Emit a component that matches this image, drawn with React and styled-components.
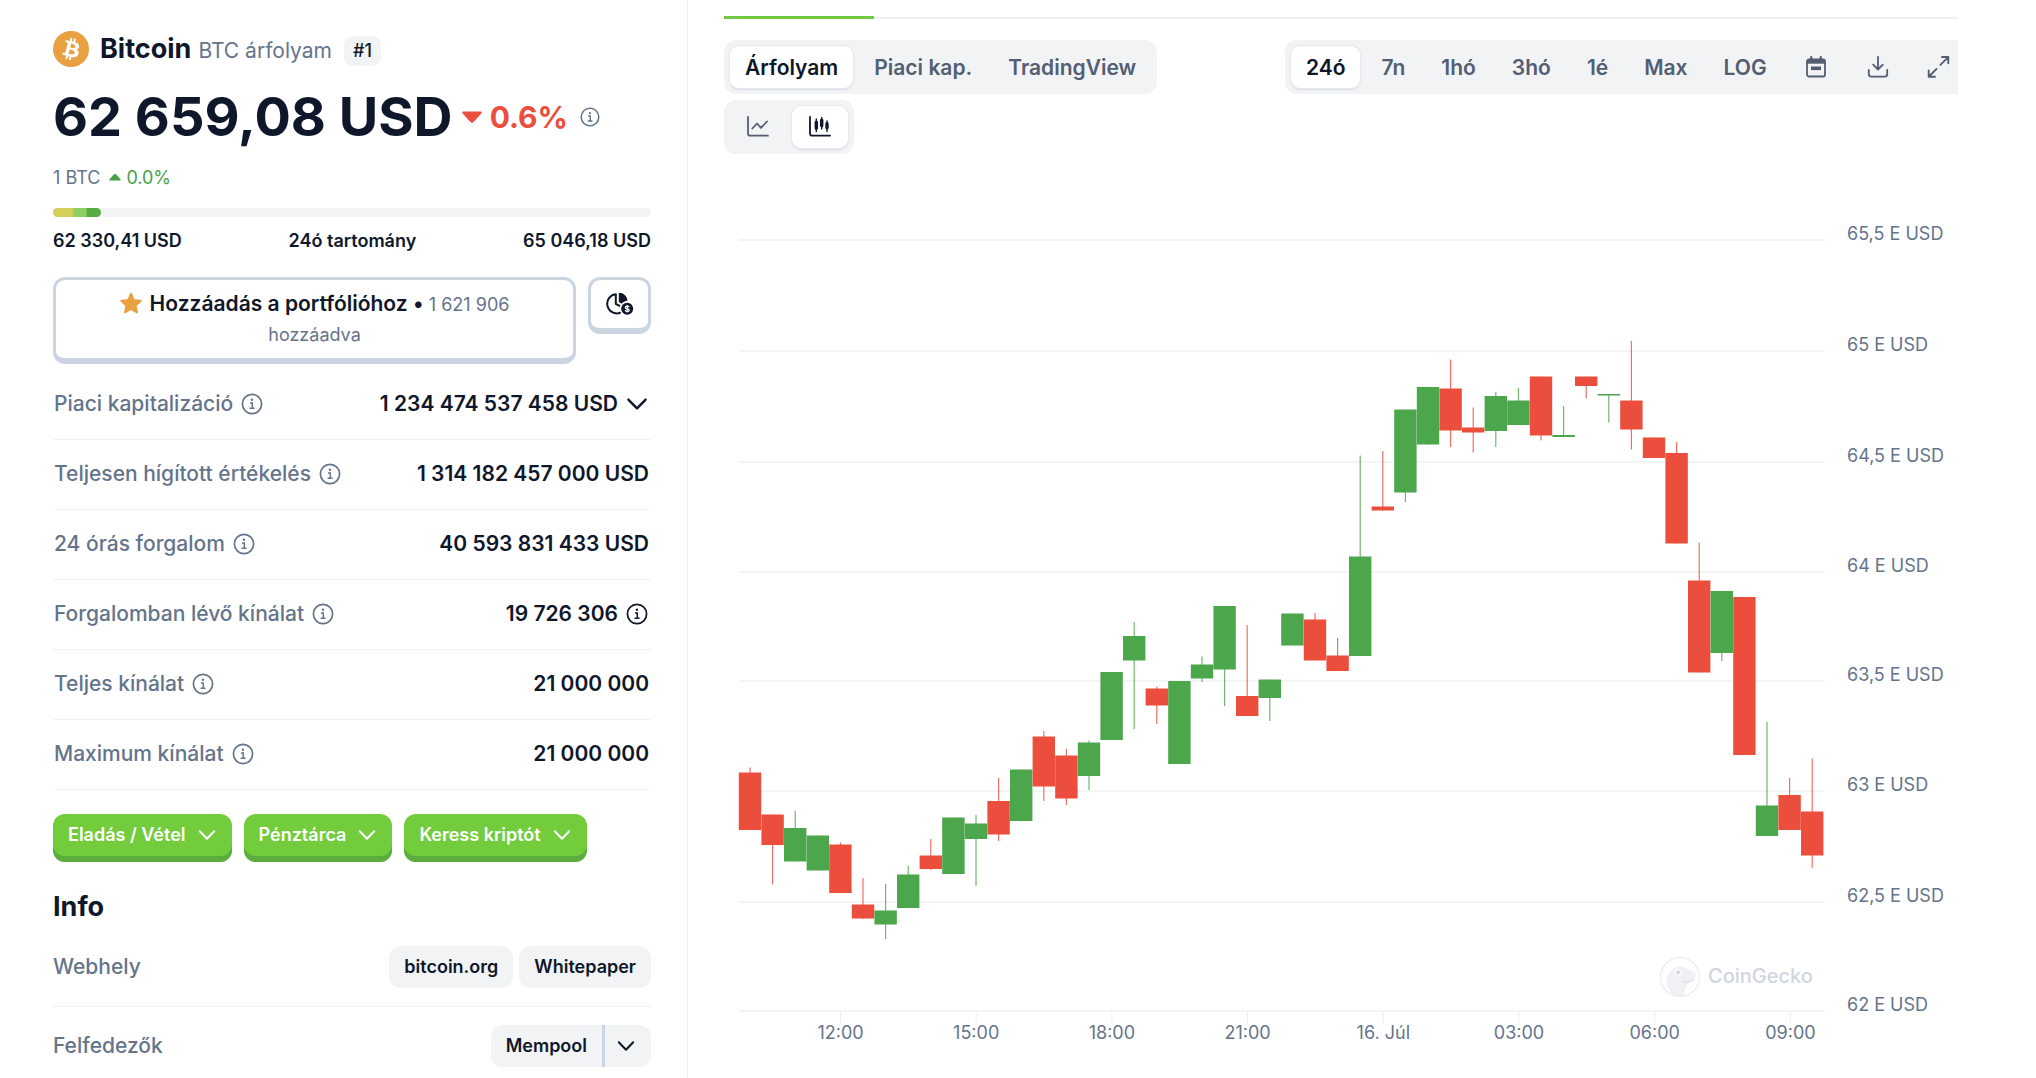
import { useState } from "react";
import styled, { createGlobalStyle } from "styled-components";

const GlobalStyle = createGlobalStyle`
  * {
    box-sizing: border-box;
  }

  body {
    margin: 0;
    background: #ffffff;
    color: #0f172a;
    font-family: Inter, "Liberation Sans", sans-serif;
    font-size: 21px;
    line-height: 30px;
  }

  button {
    font-family: inherit;
    border: 0;
    cursor: pointer;
  }

  svg {
    display: block;
    flex-shrink: 0;
  }
`;

const Page = styled.div`
  display: grid;
  grid-template-columns: 688px minmax(0, 1fr);
  min-height: 100vh;
`;

const Sidebar = styled.aside`
  padding: 31px 36px 0 53px;
  border-right: 1px solid #eff2f5;
`;

const Heading = styled.h1`
  display: flex;
  align-items: center;
  margin: 0;
  height: 36px;
  font-size: 27px;
  font-weight: 700;
`;

const CoinName = styled.span`
  margin-left: 11px;
`;

const Ticker = styled.span`
  margin: 3px 0 0 7px;
  font-size: 21px;
  font-weight: 400;
  color: #64748b;
`;

const Rank = styled.span`
  margin: 4px 0 0 12px;
  padding: 0 9px;
  border-radius: 9px;
  background: #f1f3f5;
  font-size: 18px;
  font-weight: 500;
`;

const PriceRow = styled.div`
  display: flex;
  align-items: center;
  margin-top: 14px;
  color: #64748b;
`;

const Price = styled.span`
  font-size: 54px;
  line-height: 72px;
  font-weight: 700;
  color: #0f172a;
`;

const Change = styled.span`
  display: flex;
  align-items: center;
  gap: ${(props) => (props.$large ? "8px" : "5px")};
  margin: 0 11px 0 9px;
  font-size: ${(props) => (props.$large ? "30px" : "18px")};
  font-weight: ${(props) => (props.$large ? 700 : 400)};
  color: ${(props) => (props.$up ? "#46a148" : "#ec4e3d")};
`;

const BtcRow = styled.div`
  display: flex;
  align-items: center;
  margin-top: 10px;
  font-size: 18px;
  line-height: 30px;
  color: #64748b;
`;

const RangeTrack = styled.div`
  height: 9px;
  margin-top: 15px;
  border-radius: 5px;
  background: #f1f3f5;
`;

const RangeFill = styled.div`
  height: 100%;
  border-radius: 5px;
  background: linear-gradient(
    90deg,
    #d4cf5c 40%,
    #8ed062 44%,
    #8ed062 68%,
    #57ab42 72%
  );
`;

const RangeLabels = styled.div`
  display: flex;
  justify-content: space-between;
  margin-top: 12px;
  font-size: 18px;
  line-height: 24px;
  font-weight: 600;
`;

const Actions = styled.div`
  display: flex;
  align-items: flex-start;
  gap: 12px;
  margin-top: 24px;
`;

const OutlineButton = styled.button`
  border: 3px solid #cbd5e1;
  border-bottom-width: 6px;
  border-radius: 12px;
  background: #ffffff;
  color: #0f172a;
`;

const PortfolioButton = styled(OutlineButton)`
  flex: 1;
  padding: 9px 60px;
  font-size: 21px;
  line-height: 30px;
  font-weight: 600;

  svg {
    display: inline-block;
    margin-right: 8px;
    vertical-align: -3px;
  }

  small {
    font-size: 18px;
    line-height: 24px;
    font-weight: 400;
    color: #64748b;
  }
`;

const PieButton = styled(OutlineButton)`
  display: flex;
  align-items: center;
  justify-content: center;
  width: 63px;
  height: 57px;
  padding: 0;
`;

const StatsTable = styled.table`
  width: 100%;
  margin-top: 5px;
  border-collapse: collapse;

  tr {
    height: 70px;
    border-bottom: 1px solid #eff2f5;
  }

  th,
  td {
    padding: 0 2px 0 1px;
  }
`;

const StatLabel = styled.th`
  font-weight: 500;
  color: #64748b;
`;

const StatValue = styled.td`
  font-weight: 600;
`;

const CellContent = styled.div`
  display: flex;
  align-items: center;
  justify-content: ${(props) => (props.$end ? "flex-end" : "flex-start")};
  gap: 7px;
`;

const ButtonRow = styled.div`
  display: flex;
  gap: 12px;
  margin-top: 24px;
`;

const GreenButton = styled.button`
  display: flex;
  align-items: center;
  gap: 11px;
  height: 48px;
  padding: 0 15px 6px;
  border-radius: 12px;
  background: #72cc3c;
  box-shadow: inset 0 -6px 0 #5bae3e;
  color: #ffffff;
  font-size: 18px;
  font-weight: 600;
`;

const InfoTitle = styled.h2`
  margin: 27px 0 3px;
  font-size: 27px;
  line-height: 36px;
  font-weight: 700;
`;

const InfoRow = styled.div`
  display: flex;
  align-items: center;
  justify-content: space-between;
  padding: 18px 0;
  border-bottom: 1px solid #eff2f5;
  font-weight: 500;
  color: #64748b;

  &:last-child {
    padding-bottom: 0;
    border-bottom: 0;
  }
`;

const Pills = styled.div`
  display: flex;
  gap: 6px;
`;

const Pill = styled.a`
  padding: 6px 15px;
  border-radius: 12px;
  background: #f1f3f5;
  color: #0f172a;
  font-size: 18px;
  font-weight: 600;
  text-decoration: none;
`;

const SplitPill = styled.div`
  display: flex;
  overflow: hidden;
  border-radius: 12px;
  background: #f1f3f5;

  a {
    border-radius: 0;
  }

  button {
    display: flex;
    align-items: center;
    padding: 0 15px 0 11px;
    border-left: 3px solid #cbd5e1;
    background: transparent;
    color: #0f172a;
  }
`;

const Main = styled.main`
  min-width: 0;
  padding: 16px 78px 0 36px;
`;

const TabLine = styled.div`
  height: 3px;
  background: linear-gradient(transparent 1px, #eff2f5 1px);
`;

const ActiveTab = styled.div`
  width: 150px;
  height: 3px;
  background: #72c840;
`;

const Toolbar = styled.div`
  display: grid;
  grid-template-columns: minmax(0, 5fr) minmax(0, 6fr);
  align-items: start;
  margin-top: 21px;
`;

const ToolbarLeft = styled.div`
  display: flex;
  flex-wrap: wrap;
  gap: 6px;
`;

const ToolbarRight = styled.div`
  overflow: hidden;
`;

const Segmented = styled.div`
  display: flex;
  gap: 6px;
  width: max-content;
  padding: 6px;
  border-radius: 12px;
  background: #f1f3f5;
`;

const Segment = styled.button`
  display: flex;
  align-items: center;
  justify-content: center;
  height: 42px;
  padding: 0 15px;
  border-radius: 9px;
  background: ${(props) => (props.$active ? "#ffffff" : "transparent")};
  box-shadow: ${(props) =>
    props.$active ? "0 0 0 1px #e5e8ec, 0 2px 2px #d9dce3" : "none"};
  color: ${(props) => (props.$active ? "#0f172a" : "#535e72")};
  font-size: 21px;
  font-weight: 600;
`;

const ChartSvg = styled.svg`
  width: 100%;
  height: auto;
  margin-top: 46px;
  font-size: 18px;
  fill: #64748b;
`;

const Watermark = styled.text`
  font-size: 20px;
  font-weight: 500;
  fill: #d0d5de;
`;

const InfoIcon = ({ size = 24 }) => (
  <svg width={size} height={size} viewBox="0 0 24 24" fill="none">
    <circle cx="12" cy="12" r="9.6" stroke="currentColor" strokeWidth="1.7" />
    <circle cx="11.9" cy="7.8" r="1.2" fill="currentColor" />
    <path
      d="M10 10.9h2.3v5.2M9.6 16.3h5"
      stroke="currentColor"
      strokeWidth="1.5"
    />
  </svg>
);

const Chevron = ({ size = 24 }) => (
  <svg width={size} height={size} viewBox="0 0 20 20" fill="none">
    <path
      d="M2.8 6.3 10 13.7l7.2-7.4"
      stroke="currentColor"
      strokeWidth="2"
      strokeLinecap="round"
      strokeLinejoin="round"
    />
  </svg>
);

const BitcoinLogo = () => (
  <svg width="36" height="36" viewBox="0 0 32 32">
    <circle cx="16" cy="16" r="16" fill="#e8a040" />
    <path
      fill="#ffffff"
      d="M23.189 14.02c.314-2.096-1.283-3.223-3.465-3.975l.708-2.84-1.728-.43-.69 2.765c-.454-.114-.92-.22-1.385-.326l.695-2.783L15.596 6l-.708 2.839c-.376-.086-.746-.17-1.104-.26l.002-.009-2.384-.595-.46 1.846s1.283.294 1.256.312c.7.175.826.638.805 1.006l-.806 3.235c.048.012.11.03.18.057l-.183-.045-1.13 4.532c-.086.212-.303.531-.793.41.018.025-1.256-.313-1.256-.313l-.858 1.978 2.25.561c.418.105.828.215 1.231.318l-.715 2.872 1.727.43.708-2.84c.472.127.93.245 1.378.357l-.706 2.828 1.728.43.715-2.866c2.948.558 5.164.333 6.097-2.333.752-2.146-.037-3.385-1.588-4.192 1.13-.26 1.98-1.003 2.207-2.538zm-3.95 5.538c-.533 2.147-4.148.986-5.32.695l.95-3.805c1.172.293 4.929.872 4.37 3.11zm.535-5.569c-.487 1.953-3.495.96-4.47.717l.86-3.45c.975.243 4.118.696 3.61 2.733z"
    />
  </svg>
);

const CaretDown = () => (
  <svg width="20" height="12" viewBox="0 0 20 12">
    <path
      d="M1.6.5h16.8c1.2 0 1.7 1 .9 1.9l-7.7 8.6c-.9 1-2.3 1-3.2 0L.7 2.4C-.1 1.5.4.5 1.6.5z"
      fill="currentColor"
    />
  </svg>
);

const CaretUp = () => (
  <svg width="12" height="12" viewBox="0 0 12 12">
    <path
      d="M1 8.5h10c.8 0 1-.7.5-1.2L7 2.2c-.6-.7-1.4-.7-2 0L.5 7.3C0 7.8.2 8.5 1 8.5z"
      fill="currentColor"
    />
  </svg>
);

const Star = () => (
  <svg width="22" height="22" viewBox="0 0 22 22">
    <path
      d="M11 .8c.5 0 .8.3 1 .7l2.5 5.7 6.2.6c1 .1 1.3 1.2.6 1.9l-4.7 4.2 1.4 6.1c.2 1-.8 1.7-1.6 1.2L11 17.9l-5.4 3.3c-.8.5-1.8-.2-1.6-1.2l1.4-6.1L.7 9.7C0 9 .3 7.9 1.3 7.8l6.2-.6L10 1.5c.2-.4.5-.7 1-.7z"
      fill="#e8a040"
    />
  </svg>
);

const PieIcon = () => (
  <svg width="28" height="24" viewBox="0 0 28 24" fill="none">
    <path
      d="M9.8 2.2A9.6 9.6 0 1 0 14 20.8"
      stroke="#0f172a"
      strokeWidth="2"
      strokeLinecap="round"
    />
    <path d="M9.8 2.2v9.6l4.2 2.4" stroke="#0f172a" strokeWidth="2" />
    <path
      d="M12.8.8c4.7 0 8.3 3.4 8.7 7.9-2.6.2-4.4 1.2-5.7 3l-3-1.7z"
      fill="#0f172a"
    />
    <circle cx="21.2" cy="16.8" r="6" fill="#0f172a" />
    <path
      d="M23.2 15.2c-.3-.8-1-1.1-2-1.1-2.6 0-2.6 2.5 0 2.7 2.7.2 2.7 2.7 0 2.7-1.1 0-1.8-.4-2.1-1.2M21.2 13v7.6"
      stroke="#ffffff"
      strokeWidth="1.2"
    />
  </svg>
);

const LineChartIcon = () => (
  <svg width="26" height="26" viewBox="0 0 26 26" fill="none">
    <path
      d="M3 3v16.5c0 1.5.7 2.2 2.2 2.2H23"
      stroke="currentColor"
      strokeWidth="1.8"
      strokeLinecap="round"
    />
    <path
      d="M7.3 14.5 12 9.5l4 4.3 6-6.3"
      stroke="currentColor"
      strokeWidth="1.8"
      strokeLinecap="round"
      strokeLinejoin="round"
    />
  </svg>
);

const CandlesIcon = () => (
  <svg width="26" height="26" viewBox="0 0 26 26" fill="none">
    <path
      d="M3 3v16.5c0 1.5.7 2.2 2.2 2.2H23"
      stroke="currentColor"
      strokeWidth="1.8"
      strokeLinecap="round"
    />
    <path
      d="M9.3 5v12.5M14.7 3.5V15M20 7v10.5"
      stroke="currentColor"
      strokeWidth="1.4"
      strokeLinecap="round"
    />
    <path
      d="M9.3 8.2v6M14.7 6.2v5.5M20 9.8v4"
      stroke="currentColor"
      strokeWidth="3.4"
      strokeLinecap="round"
    />
  </svg>
);

const CalendarIcon = () => (
  <svg width="26" height="26" viewBox="0 0 26 26" fill="none">
    <rect
      x="4"
      y="5.5"
      width="18"
      height="17"
      rx="2"
      stroke="currentColor"
      strokeWidth="1.8"
    />
    <path d="M4 5.5h18v4.2H4z" fill="currentColor" />
    <path
      d="M8.2 3v4M17.8 3v4"
      stroke="currentColor"
      strokeWidth="2.2"
      strokeLinecap="round"
    />
    <path d="M8 12.5h10v3.6H8z" fill="currentColor" />
  </svg>
);

const DownloadIcon = () => (
  <svg width="26" height="26" viewBox="0 0 26 26" fill="none">
    <path
      d="M13 3v12M8.2 10.7 13 15.5l4.8-4.8M3.8 15.8V20c0 1.7.9 2.6 2.6 2.6h13.2c1.7 0 2.6-.9 2.6-2.6v-4.2"
      stroke="currentColor"
      strokeWidth="1.8"
      strokeLinecap="round"
      strokeLinejoin="round"
    />
  </svg>
);

const ExpandIcon = () => (
  <svg width="26" height="26" viewBox="0 0 26 26" fill="none">
    <path
      d="M15 3h6.3v6.2M21 3.3l-7.6 7.6M8 22.8H1.7v-6.3M2 22.5l7.6-7.6"
      stroke="currentColor"
      strokeWidth="1.9"
      strokeLinecap="round"
      strokeLinejoin="round"
    />
  </svg>
);

const stats = [
  { label: "Piaci kapitalizáció", value: "1 234 474 537 458 USD", icon: "more" },
  { label: "Teljesen hígított értékelés", value: "1 314 182 457 000 USD" },
  { label: "24 órás forgalom", value: "40 593 831 433 USD" },
  { label: "Forgalomban lévő kínálat", value: "19 726 306", icon: "info" },
  { label: "Teljes kínálat", value: "21 000 000" },
  { label: "Maximum kínálat", value: "21 000 000" },
];

const views = ["Árfolyam", "Piaci kap.", "TradingView"];
const ranges = ["24ó", "7n", "1hó", "3hó", "1é", "Max", "LOG"];

const priceTicks = [
  { label: "65,5 E USD", y: 240 },
  { label: "65 E USD", y: 351 },
  { label: "64,5 E USD", y: 462 },
  { label: "64 E USD", y: 572 },
  { label: "63,5 E USD", y: 681 },
  { label: "63 E USD", y: 791 },
  { label: "62,5 E USD", y: 902 },
  { label: "62 E USD", y: 1011 },
];

const timeTicks = [
  "12:00",
  "15:00",
  "18:00",
  "21:00",
  "16. Júl",
  "03:00",
  "06:00",
  "09:00",
];

// one candle per half hour: direction, high, body top, body bottom, low
const candles = [
  ["down", 767.5, 772.5, 830, 830],
  ["down", 814.5, 814.5, 845, 884.5],
  ["up", 811, 828, 861.5, 861.5],
  ["up", 835.5, 835.5, 870.5, 870.5],
  ["down", 842.5, 844.5, 893, 893],
  ["down", 878, 904.5, 918.5, 919],
  ["up", 884, 910.5, 924.5, 939],
  ["up", 866, 874.5, 908, 908],
  ["down", 839, 855.5, 869, 870],
  ["up", 817.5, 817.5, 874, 874],
  ["up", 815, 823.5, 839, 886],
  ["down", 778, 801, 834.5, 841],
  ["up", 769.5, 769.5, 821, 821],
  ["down", 731, 736.5, 786.5, 801],
  ["down", 749, 755.5, 798.5, 805],
  ["up", 740.5, 742.5, 776, 790],
  ["up", 672, 672, 740, 740],
  ["up", 622, 636, 660.5, 729],
  ["down", 686.5, 688.5, 705.5, 724],
  ["up", 681, 681, 764, 764],
  ["up", 656.5, 664.5, 678.5, 682],
  ["up", 606, 606, 669.5, 706],
  ["down", 625, 696, 716, 716],
  ["up", 679.5, 679.5, 698, 721],
  ["up", 613.5, 613.5, 645.5, 645.5],
  ["down", 613, 619.5, 660.5, 660.5],
  ["down", 638, 655.5, 671, 671],
  ["up", 455.5, 556.5, 656, 656],
  ["down", 451, 506.5, 510.5, 510.5],
  ["up", 409.5, 409.5, 492.5, 502],
  ["up", 387, 387, 444.5, 444.5],
  ["down", 359.5, 388.5, 430.5, 447],
  ["down", 407.5, 427.5, 432.5, 452.5],
  ["up", 392, 396, 431, 447],
  ["up", 388, 400.5, 425, 425],
  ["down", 376.5, 376.5, 435.5, 440.5],
  ["up", 406, 435, 437, 437],
  ["down", 376.5, 376.5, 386, 398.5],
  ["up", 394, 394, 395.5, 422.5],
  ["down", 341, 400.5, 429.5, 449.5],
  ["down", 437.5, 437.5, 458, 458],
  ["down", 442, 453, 543.5, 543.5],
  ["down", 542.5, 580.5, 672.5, 672.5],
  ["up", 591, 591, 653, 661],
  ["down", 597, 597, 755, 755],
  ["up", 722, 805.5, 836, 836],
  ["down", 778, 795, 830, 830],
  ["down", 758.5, 811.5, 855.5, 868],
];

const PriceChart = () => (
  <ChartSvg viewBox="0 200 1234 860" role="img" aria-label="Bitcoin árfolyam">
    {priceTicks.map(({ label, y }) => (
      <g key={label}>
        <path d={`M15 ${y}H1101`} stroke="#eff1f3" strokeWidth="1.5" />
        <text x="1123" y={y}>
          {label}
        </text>
      </g>
    ))}
    {timeTicks.map((label, i) => (
      <g key={label}>
        <path d={`M${116.5 + i * 135.7} 1011v14`} stroke="#eff1f3" />
        <text x={116.5 + i * 135.7} y="1039" textAnchor="middle">
          {label}
        </text>
      </g>
    ))}
    {candles.map(([direction, high, top, bottom, low], i) => {
      const x = 26 + i * 22.6;
      const color = direction === "up" ? "#4ca64c" : "#ec4e3d";
      return (
        <g key={i} fill={color}>
          <rect x={x - 0.6} y={high} width="1.2" height={low - high} opacity="0.8" />
          <rect x={x - 11.2} y={top} width="22.4" height={bottom - top} />
        </g>
      );
    })}
    <circle cx="956" cy="977" r="19.5" fill="#ffffff" stroke="#eceef1" strokeWidth="1.5" />
    <path
      d="M947 993c-4-8-6-12-2.5-19 2.5-5 6.5-7.5 11-7.3 6 .2 7.5 2.3 11 3.8 3.5 1.3 5.5 2.8 5.5 5 0 3.5-5 5.5-8 8-3 3-3 8-5 13-5 1-9-.5-12-3.5z"
      fill="#eff1f4"
    />
    <path d="M958 982c5 .3 9-.3 12-2.5" fill="none" stroke="#dde1e6" strokeWidth="1.5" />
    <circle cx="954" cy="972.5" r="3.5" fill="#ffffff" />
    <circle cx="954" cy="972.5" r="2.2" fill="#d5dae1" />
    <Watermark x="984" y="983">
      CoinGecko
    </Watermark>
  </ChartSvg>
);

function App() {
  const [view, setView] = useState("Árfolyam");
  const [range, setRange] = useState("24ó");
  const [chartType, setChartType] = useState("candles");
  const rangeFill = 8;

  return (
    <>
      <GlobalStyle />
      <Page>
        <Sidebar>
          <Heading>
            <BitcoinLogo />
            <CoinName>Bitcoin</CoinName>
            <Ticker>BTC árfolyam</Ticker>
            <Rank>#1</Rank>
          </Heading>
          <PriceRow>
            <Price>62 659,08 USD</Price>
            <Change $large>
              <CaretDown />
              0.6%
            </Change>
            <InfoIcon size={22} />
          </PriceRow>
          <BtcRow>
            1 BTC
            <Change $up>
              <CaretUp />
              0.0%
            </Change>
          </BtcRow>
          <RangeTrack>
            <RangeFill style={{ width: `${rangeFill}%` }} />
          </RangeTrack>
          <RangeLabels>
            <span>62 330,41 USD</span>
            <span>24ó tartomány</span>
            <span>65 046,18 USD</span>
          </RangeLabels>

          <Actions>
            <PortfolioButton>
              <Star />
              Hozzáadás a portfólióhoz • <small>1 621 906 hozzáadva</small>
            </PortfolioButton>
            <PieButton aria-label="Portfólió">
              <PieIcon />
            </PieButton>
          </Actions>

          <StatsTable>
            <tbody>
              {stats.map((stat) => (
                <tr key={stat.label}>
                  <StatLabel scope="row">
                    <CellContent>
                      {stat.label}
                      <InfoIcon />
                    </CellContent>
                  </StatLabel>
                  <StatValue>
                    <CellContent $end>
                      {stat.value}
                      {stat.icon === "more" && <Chevron />}
                      {stat.icon === "info" && <InfoIcon />}
                    </CellContent>
                  </StatValue>
                </tr>
              ))}
            </tbody>
          </StatsTable>

          <ButtonRow>
            {["Eladás / Vétel", "Pénztárca", "Keress kriptót"].map((label) => (
              <GreenButton key={label}>
                {label}
                <Chevron size={20} />
              </GreenButton>
            ))}
          </ButtonRow>

          <InfoTitle>Info</InfoTitle>
          <InfoRow>
            Webhely
            <Pills>
              <Pill href="#bitcoin">bitcoin.org</Pill>
              <Pill href="#whitepaper">Whitepaper</Pill>
            </Pills>
          </InfoRow>
          <InfoRow>
            Felfedezők
            <SplitPill>
              <Pill href="#mempool">Mempool</Pill>
              <button aria-label="Felfedezők">
                <Chevron size={20} />
              </button>
            </SplitPill>
          </InfoRow>
        </Sidebar>

        <Main>
          <TabLine>
            <ActiveTab />
          </TabLine>
          <Toolbar>
            <ToolbarLeft>
              <Segmented>
                {views.map((name) => (
                  <Segment
                    key={name}
                    $active={view === name}
                    onClick={() => setView(name)}
                  >
                    {name}
                  </Segment>
                ))}
              </Segmented>
              <Segmented>
                <Segment
                  aria-label="Vonal"
                  $active={chartType === "line"}
                  onClick={() => setChartType("line")}
                >
                  <LineChartIcon />
                </Segment>
                <Segment
                  aria-label="Gyertya"
                  $active={chartType === "candles"}
                  onClick={() => setChartType("candles")}
                >
                  <CandlesIcon />
                </Segment>
              </Segmented>
            </ToolbarLeft>
            <ToolbarRight>
              <Segmented>
                {ranges.map((name) => (
                  <Segment
                    key={name}
                    $active={range === name}
                    onClick={() => setRange(name)}
                  >
                    {name}
                  </Segment>
                ))}
                <Segment aria-label="Naptár">
                  <CalendarIcon />
                </Segment>
                <Segment aria-label="Letöltés">
                  <DownloadIcon />
                </Segment>
                <Segment aria-label="Teljes képernyő">
                  <ExpandIcon />
                </Segment>
              </Segmented>
            </ToolbarRight>
          </Toolbar>
          <PriceChart />
        </Main>
      </Page>
    </>
  );
}

export default App;
